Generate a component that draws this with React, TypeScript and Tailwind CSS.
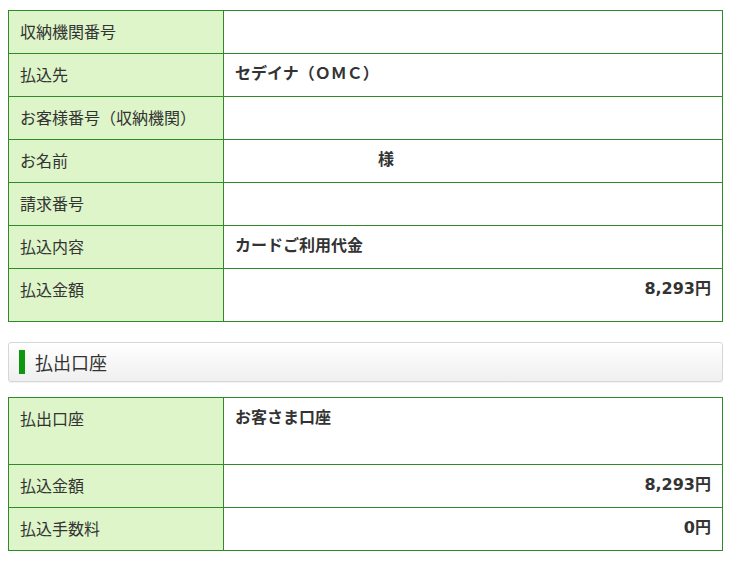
import React from "react";

const font = { fontFamily: '"DejaVu Sans", "Noto Sans CJK JP", sans-serif' };

type Row = { label: string; value?: React.ReactNode; right?: boolean; tall?: string };

const payRows: Row[] = [
  { label: "収納機関番号" },
  { label: "払込先", value: "セデイナ（ＯＭＣ）" },
  { label: "お客様番号（収納機関）" },
  {
    label: "お名前",
    value: (
      <>
        <span className="inline-block w-[143px]" />様
      </>
    ),
  },
  { label: "請求番号" },
  { label: "払込内容", value: "カードご利用代金" },
  { label: "払込金額", value: "8,293円", right: true, tall: "h-[53px]" },
];

const accountRows: Row[] = [
  { label: "払出口座", value: "お客さま口座", tall: "h-[67px]" },
  { label: "払込金額", value: "8,293円", right: true },
  { label: "払込手数料", value: "0円", right: true },
];

function InfoTable({ rows }: { rows: Row[] }) {
  return (
    <table className="ml-[8px] w-[715px] border-collapse text-[16px] leading-[22px] text-[#333]">
      <tbody>
        {rows.map((row) => (
          <tr key={row.label} className={row.tall ?? "h-[43px]"}>
            <td className="w-[215px] border border-[#2f8a2a] bg-[#ddf5c8] px-[11px] pt-[9px] pb-[11px] align-top font-['Noto_Sans_CJK_JP'] font-normal">
              {row.label}
            </td>
            <td
              className={`border border-[#2f8a2a] bg-white px-[11px] pt-[9px] pb-[11px] align-top font-bold ${
                row.right ? "text-right" : "text-left"
              }`}
            >
              {row.value}
            </td>
          </tr>
        ))}
      </tbody>
    </table>
  );
}

export default function App() {
  return (
    <div className="min-h-[565px] w-[733px] bg-white pt-[10px]" style={font}>
      <InfoTable rows={payRows} />
      <div className="mx-[8px] mt-[20px] mb-[15px] flex h-[40px] w-[715px] items-center rounded-[3px] border border-[#d6d6d6] bg-gradient-to-b from-white to-[#efefef] pl-[10px] shadow-[0_1px_1px_rgba(0,0,0,0.05)]">
        <span className="h-[24px] w-[6px] bg-[#0f960f]" />
        <span className="ml-[10px] font-['Noto_Sans_CJK_JP'] text-[18px] text-[#333]">払出口座</span>
      </div>
      <InfoTable rows={accountRows} />
    </div>
  );
}
